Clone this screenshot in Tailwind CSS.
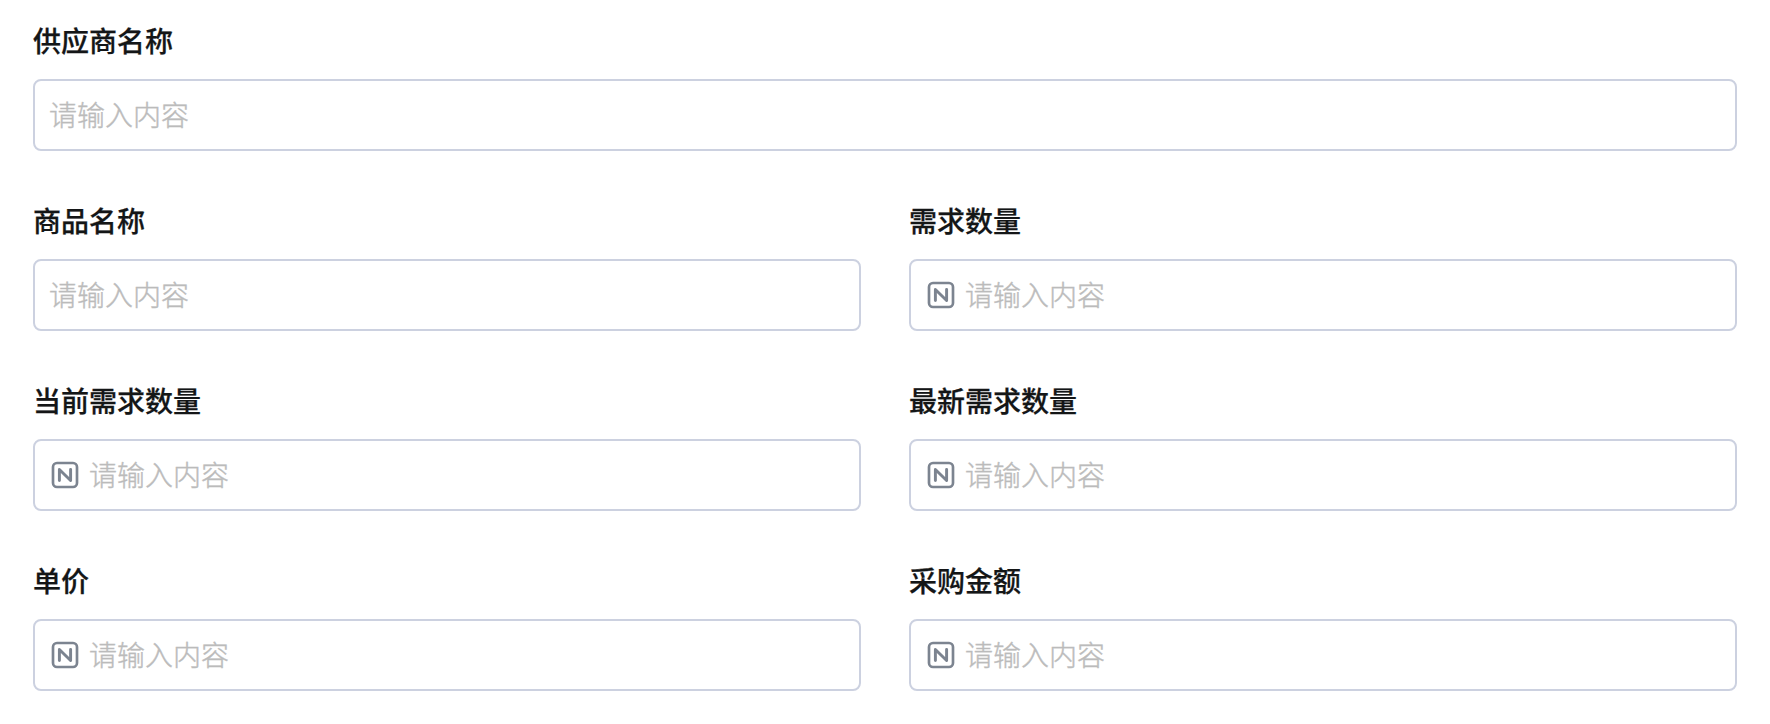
<!DOCTYPE html>
<html lang="zh-CN">
<head>
<meta charset="utf-8">
<title>采购表单</title>
<script src="https://cdn.jsdelivr.net/npm/@tailwindcss/browser@4"></script>
</head>
<body class="bg-white font-['Noto_Sans_CJK_SC',sans-serif] text-[28px] leading-[42px] text-[#141617]">
<svg class="hidden">
  <symbol id="number" viewBox="0 0 24 24" fill="none" stroke="currentColor" stroke-width="2" stroke-linecap="round" stroke-linejoin="round">
    <rect x="3" y="3" width="18" height="18" rx="3"/>
    <path stroke-width="2.2" d="M7.8 16.1V7.9L16.2 16.1V7.9"/>
  </symbol>
</svg>
<form class="grid h-[724px] grid-cols-2 content-start gap-x-12 gap-y-11 overflow-hidden pt-[15px] pr-[33px] pl-[33px]">
  <div class="col-span-2 flex h-[136px] flex-col justify-between">
    <div class="pt-1 font-medium [-webkit-text-stroke:0.25px_#141617]">供应商名称</div>
    <div class="flex h-[72px] items-center rounded-lg border-2 border-[#ccd1e0] px-3.5 font-light text-[#bbbbbb]"><span class="pb-0.5 [-webkit-text-stroke:0.4px_#bebebe]">请输入内容</span></div>
  </div>
  <div class="flex h-[136px] flex-col justify-between">
    <div class="pt-1 font-medium [-webkit-text-stroke:0.25px_#141617]">商品名称</div>
    <div class="flex h-[72px] items-center rounded-lg border-2 border-[#ccd1e0] px-3.5 font-light text-[#bbbbbb]"><span class="pb-0.5 [-webkit-text-stroke:0.4px_#bebebe]">请输入内容</span></div>
  </div>
  <div class="flex h-[136px] flex-col justify-between">
    <div class="pt-1 font-medium [-webkit-text-stroke:0.25px_#141617]">需求数量</div>
    <div class="flex h-[72px] items-center gap-2 rounded-lg border-2 border-[#ccd1e0] px-3.5 font-light text-[#bbbbbb]"><svg class="size-8 text-[#7c8490]"><use href="#number"/></svg><span class="pb-0.5 [-webkit-text-stroke:0.4px_#bebebe]">请输入内容</span></div>
  </div>
  <div class="flex h-[136px] flex-col justify-between">
    <div class="pt-1 font-medium [-webkit-text-stroke:0.25px_#141617]">当前需求数量</div>
    <div class="flex h-[72px] items-center gap-2 rounded-lg border-2 border-[#ccd1e0] px-3.5 font-light text-[#bbbbbb]"><svg class="size-8 text-[#7c8490]"><use href="#number"/></svg><span class="pb-0.5 [-webkit-text-stroke:0.4px_#bebebe]">请输入内容</span></div>
  </div>
  <div class="flex h-[136px] flex-col justify-between">
    <div class="pt-1 font-medium [-webkit-text-stroke:0.25px_#141617]">最新需求数量</div>
    <div class="flex h-[72px] items-center gap-2 rounded-lg border-2 border-[#ccd1e0] px-3.5 font-light text-[#bbbbbb]"><svg class="size-8 text-[#7c8490]"><use href="#number"/></svg><span class="pb-0.5 [-webkit-text-stroke:0.4px_#bebebe]">请输入内容</span></div>
  </div>
  <div class="flex h-[136px] flex-col justify-between">
    <div class="pt-1 font-medium [-webkit-text-stroke:0.25px_#141617]">单价</div>
    <div class="flex h-[72px] items-center gap-2 rounded-lg border-2 border-[#ccd1e0] px-3.5 font-light text-[#bbbbbb]"><svg class="size-8 text-[#7c8490]"><use href="#number"/></svg><span class="pb-0.5 [-webkit-text-stroke:0.4px_#bebebe]">请输入内容</span></div>
  </div>
  <div class="flex h-[136px] flex-col justify-between">
    <div class="pt-1 font-medium [-webkit-text-stroke:0.25px_#141617]">采购金额</div>
    <div class="flex h-[72px] items-center gap-2 rounded-lg border-2 border-[#ccd1e0] px-3.5 font-light text-[#bbbbbb]"><svg class="size-8 text-[#7c8490]"><use href="#number"/></svg><span class="pb-0.5 [-webkit-text-stroke:0.4px_#bebebe]">请输入内容</span></div>
  </div>
</form>
</body>
</html>
